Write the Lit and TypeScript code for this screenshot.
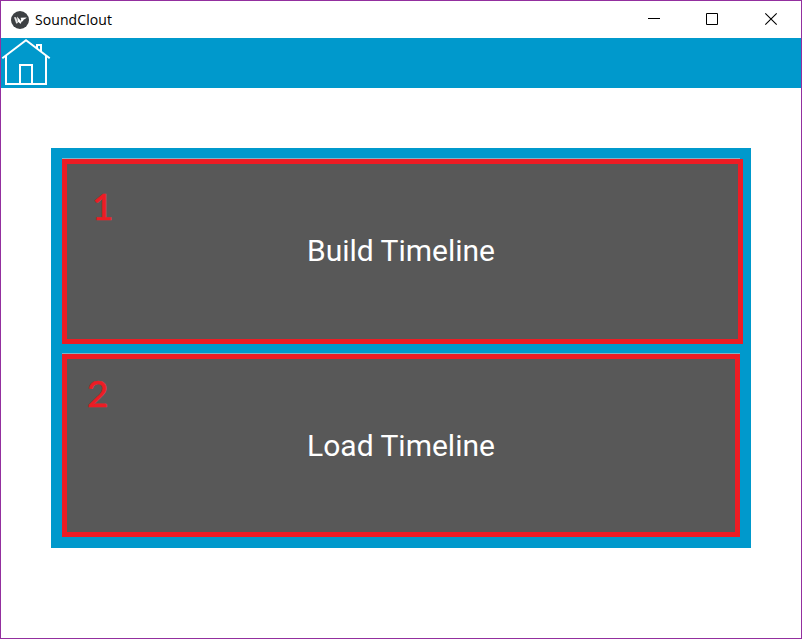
import { LitElement, html, css } from "lit";
import { customElement, property } from "lit/decorators.js";

@customElement("title-bar")
class TitleBar extends LitElement {
  static styles = css`
    :host { display: flex; height: 37px; align-items: center; background: #fff; color: #000; }
    .logo { width: 18px; height: 18px; margin: 0 6px 0 10px; }
    .name { flex: 1; font: 14px/20px "Open Sans", sans-serif; letter-spacing: 0.08px; padding-top: 1px; }
    .controls { display: flex; height: 100%; }
    .control { width: 58px; height: 37px; }
    .close { width: 60px; }
  `;
  render() {
    return html`
      <svg class="logo" viewBox="0 0 18 18">
        <circle cx="9" cy="9" r="9" fill="#3d4043" />
        <path d="M3 6.2H5L7 11.6L6 12.4H5.2Z" fill="#e4e4e4" />
        <path d="M6 5.6L9.6 9.4L8.6 12.2L6.8 10.4Z" fill="#fff" />
        <path d="M9.6 6.8L15.8 6.4L14 8.1L12.8 8.4L11.8 10.2L10.8 10.6L9.4 13L8.4 11.4L10.2 8.8Z" fill="#fff" />
      </svg>
      <span class="name">SoundClout</span>
      <div class="controls">
        <svg class="control" viewBox="0 0 58 37"><path d="M23 17.5H35" stroke="#000" /></svg>
        <svg class="control" viewBox="0 0 58 37"><path d="M23.5 12.5h11v11h-11z" fill="none" stroke="#000" /></svg>
        <svg class="control close" viewBox="0 0 60 37"><path d="M24.3 12.3l11.4 11.4M35.7 12.3L24.3 23.7" stroke="#000" stroke-width="1.1" /></svg>
      </div>
    `;
  }
}

@customElement("nav-bar")
class NavBar extends LitElement {
  static styles = css`
    :host { display: flex; height: 50px; background: #0099cc; }
    .home { width: 50px; height: 50px; }
  `;
  render() {
    return html`
      <svg class="home" viewBox="0 0 50 50" fill="none" stroke="#fff" stroke-width="2">
        <path d="M1.3 20.3L25 2.2L48.7 20.3M5 18V46H45V18M19 46V27H31V46M36 10V7H40V13.5" />
      </svg>
    `;
  }
}

@customElement("choice-tile")
class ChoiceTile extends LitElement {
  @property() number = "";
  @property() label = "";
  static styles = css`
    :host { display: flex; flex-direction: column; }
    .highlight { width: 678px; height: 1px; background: #7fb4c6; }
    .frame {
      position: relative; box-sizing: border-box; flex: 1;
      display: flex; border: 5px solid #ed1c24; background: #585858;
    }
    .label {
      width: 668px; margin-top: 69px; text-align: center; color: #fff;
      font: 30px/36px Roboto, sans-serif; white-space: nowrap;
    }
    .number {
      position: absolute; color: #ed1c24; left: var(--number-x); top: var(--number-y);
      font: 37px/46px Lato, sans-serif; -webkit-text-stroke: 0.6px #ed1c24;
    }
  `;
  render() {
    return html`
      <div class="highlight"></div>
      <div class="frame">
        <span class="number">${this.number}</span>
        <span class="label">${this.label}</span>
      </div>
    `;
  }
}

@customElement("app-root")
class AppRoot extends LitElement {
  static styles = css`
    :host {
      display: flex; flex-direction: column; box-sizing: border-box;
      width: 802px; height: 639px; border: 1px solid #932f9f; background: #fff;
    }
    .panel {
      box-sizing: border-box; width: 700px; height: 400px; margin: 60px 50px 0;
      padding: 10px 0 0 11px; background: #0099cc;
      display: flex; flex-direction: column; gap: 9px;
    }
    .build { width: 681px; height: 186px; --number-x: 25px; --number-y: 19px; }
    .load { width: 678px; height: 184px; --number-x: 20px; --number-y: 11px; }
  `;
  render() {
    return html`
      <title-bar></title-bar>
      <nav-bar></nav-bar>
      <main class="panel">
        <choice-tile class="build" number="1" label="Build Timeline"></choice-tile>
        <choice-tile class="load" number="2" label="Load Timeline"></choice-tile>
      </main>
    `;
  }
}
